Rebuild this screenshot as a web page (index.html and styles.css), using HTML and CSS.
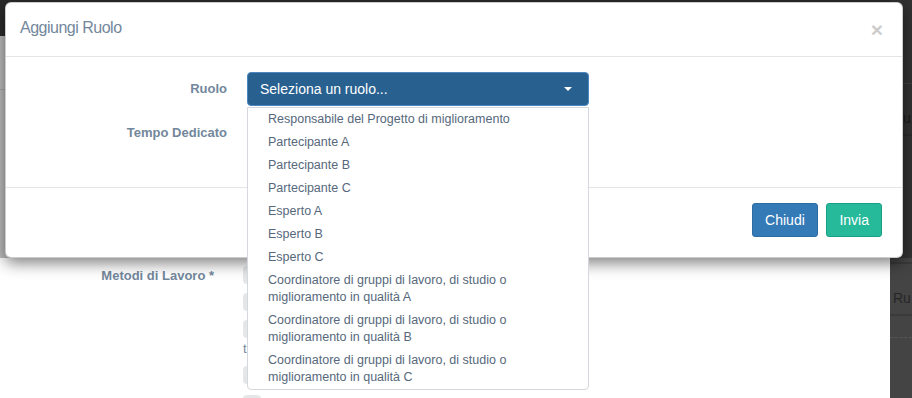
FILE: index.html
```html
<!DOCTYPE html>
<html lang="it">
<head>
    <meta charset="UTF-8">
    <meta name="viewport" content="width=device-width, initial-scale=1.0">
    <title>Aggiungi Ruolo</title>
    <link rel="stylesheet" href="styles.css">
</head>
<body>

<div class="page">
    <!-- Page behind the modal -->
    <div class="main">
        <div class="topbar"></div>
        <div class="page-title"></div>

        <div class="form-area">
            <label class="form-label">Metodi di Lavoro *</label>
            <div class="checks">
                <div class="check-row"><span class="check-box"></span></div>
                <div class="check-row"><span class="check-box"></span></div>
                <div class="check-row"><span class="check-box"></span><br>tutti</div>
                <div class="check-row"><span class="check-box"></span></div>
                <div class="check-row"><span class="check-box"></span></div>
            </div>
        </div>
    </div>

    <div class="side">
        <div class="side-head"></div>
        <div class="side-row">Ru</div>
        <div class="side-gap"></div>
        <div class="side-row">Ru</div>
        <div class="side-dash"></div>
    </div>

    <div class="backdrop"></div>

    <!-- Modal -->
    <div class="modal">
        <div class="modal-header">
            <h4 class="modal-title">Aggiungi Ruolo</h4>
            <button type="button" class="close">&times;</button>
        </div>

        <div class="modal-body">
            <div class="form-row">
                <label class="row-label">Ruolo</label>
                <div class="select-wrap">
                    <button type="button" class="select-btn">
                        <span>Seleziona un ruolo...</span>
                        <span class="caret"></span>
                    </button>
                    <ul class="dropdown">
                        <li>Responsabile del Progetto di miglioramento</li>
                        <li>Partecipante A</li>
                        <li>Partecipante B</li>
                        <li>Partecipante C</li>
                        <li>Esperto A</li>
                        <li>Esperto B</li>
                        <li>Esperto C</li>
                        <li>Coordinatore di gruppi di lavoro, di studio o miglioramento in qualità A</li>
                        <li>Coordinatore di gruppi di lavoro, di studio o miglioramento in qualità B</li>
                        <li>Coordinatore di gruppi di lavoro, di studio o miglioramento in qualità C</li>
                    </ul>
                </div>
            </div>
            <div class="form-row">
                <label class="row-label">Tempo Dedicato</label>
                <div class="input-box"></div>
            </div>
        </div>

        <div class="modal-footer">
            <button type="button" class="btn btn-primary">Chiudi</button>
            <button type="button" class="btn btn-success">Invia</button>
        </div>
    </div>
</div>

</body>
</html>
```

FILE: styles.css
```css
        * {
            box-sizing: border-box;
        }

        body {
            margin: 0;
            font-family: "Liberation Sans", Arial, sans-serif;
            font-size: 13px;
            color: #73879c;
            background-color: #ffffff;
        }

        .page {
            position: relative;
            display: flex;
            height: 398px;
            overflow: hidden;
        }

        /* page behind */
        .main {
            flex: 1;
            background-color: #ffffff;
        }

        .topbar {
            height: 36px;
            background-color: #3b3b3b;
        }

        .page-title {
            height: 54px;
            border-bottom: 1px solid #e4e4e4;
        }

        .form-area {
            display: grid;
            grid-template-columns: 214px 320px;
            column-gap: 29px;
            padding-top: 176px;
        }

        .form-label {
            text-align: right;
            font-weight: bold;
            line-height: 20px;
        }

        .check-row {
            line-height: 20px;
            margin-bottom: 7px;
        }

        .check-row:nth-child(3) {
            line-height: 19px;
            margin-bottom: 8px;
        }

        .check-row:nth-child(4) {
            margin-bottom: 9px;
        }

        .check-box {
            display: inline-block;
            width: 18px;
            height: 18px;
            vertical-align: -4px;
            background-color: #e4e6e8;
            border-radius: 4px;
        }

        .side {
            width: 22px;
            background-color: #444444;
            color: #262626;
            font-size: 14px;
            white-space: nowrap;
            overflow: hidden;
        }

        .side-head {
            height: 84px;
            border-bottom: 1px solid #555555;
        }

        .side-row {
            height: 52px;
            padding: 24px 0 0 3px;
            line-height: 20px;
            border-bottom: 2px solid #3a3a3a;
        }

        .side-gap {
            height: 128px;
            border-bottom: 2px solid #3a3a3a;
        }

        .side-dash {
            height: 22px;
            border-bottom: 1px dashed #555555;
        }

        .backdrop {
            position: absolute;
            top: 0;
            left: 0;
            width: 100%;
            height: 258px;
            background-color: rgba(0, 0, 0, 0.26);
        }

        /* modal */
        .modal {
            position: absolute;
            top: 2px;
            left: 5px;
            width: 898px;
            background-color: #ffffff;
            border: 1px solid rgba(0, 0, 0, 0.2);
            border-radius: 6px;
            box-shadow: 0 5px 15px rgba(0, 0, 0, 0.5);
        }

        .modal-header {
            display: flex;
            justify-content: space-between;
            align-items: flex-start;
            padding: 14px 19px 16px 14px;
            border-bottom: 1px solid #e5e5e5;
        }

        .modal-title {
            margin: 0;
            font-size: 16px;
            font-weight: normal;
            letter-spacing: -0.5px;
            line-height: 22.86px;
            color: #73879c;
        }

        .close {
            padding: 0;
            margin-top: 2px;
            border: none;
            background: none;
            font-family: "Liberation Sans", Arial, sans-serif;
            font-size: 21px;
            font-weight: bold;
            line-height: 1;
            color: #000000;
            opacity: 0.2;
            cursor: pointer;
        }

        .modal-body {
            padding: 15px 15px 37px;
        }

        .form-row {
            display: grid;
            grid-template-columns: 206px 342px;
            column-gap: 20px;
            margin-bottom: 10px;
        }

        .form-row:last-child {
            margin-bottom: 0;
        }

        .row-label {
            padding-top: 7px;
            text-align: right;
            font-weight: bold;
            line-height: 20px;
        }

        .select-wrap {
            position: relative;
        }

        .select-btn {
            display: flex;
            justify-content: space-between;
            align-items: center;
            width: 100%;
            height: 34px;
            padding: 6px 12px;
            border: 1px solid #4d87c2;
            border-radius: 4px;
            background-color: #286090;
            color: #ffffff;
            font-family: "Liberation Sans", Arial, sans-serif;
            font-size: 14px;
            line-height: 20px;
            cursor: pointer;
        }

        .caret {
            width: 0;
            height: 0;
            margin-right: 4px;
            border-top: 4px solid #ffffff;
            border-left: 4px solid transparent;
            border-right: 4px solid transparent;
        }

        .dropdown {
            position: absolute;
            top: 35px;
            left: 0;
            z-index: 10;
            width: 342px;
            margin: 0;
            padding: 0;
            list-style: none;
            background-color: #ffffff;
            border: 1px solid #d5d8dc;
            border-radius: 0 0 4px 4px;
        }

        .dropdown li {
            padding: 3px 20px;
            font-size: 12.5px;
            line-height: 17px;
            color: #56687c;
            cursor: pointer;
        }

        .input-box {
            height: 34px;
        }

        .modal-footer {
            padding: 15px;
            text-align: right;
            border-top: 1px solid #e5e5e5;
        }

        .btn {
            display: inline-block;
            margin: 0 5px 5px 0;
            padding: 6px 12px;
            border: 1px solid transparent;
            border-radius: 3px;
            color: #ffffff;
            font-family: "Liberation Sans", Arial, sans-serif;
            font-size: 14px;
            line-height: 20px;
            cursor: pointer;
        }

        .btn + .btn {
            margin-left: 0;
        }

        .btn-primary {
            background-color: #337ab7;
            border-color: #2e6da4;
        }

        .btn-success {
            background-color: #26b99a;
            border-color: #169f85;
        }
```
